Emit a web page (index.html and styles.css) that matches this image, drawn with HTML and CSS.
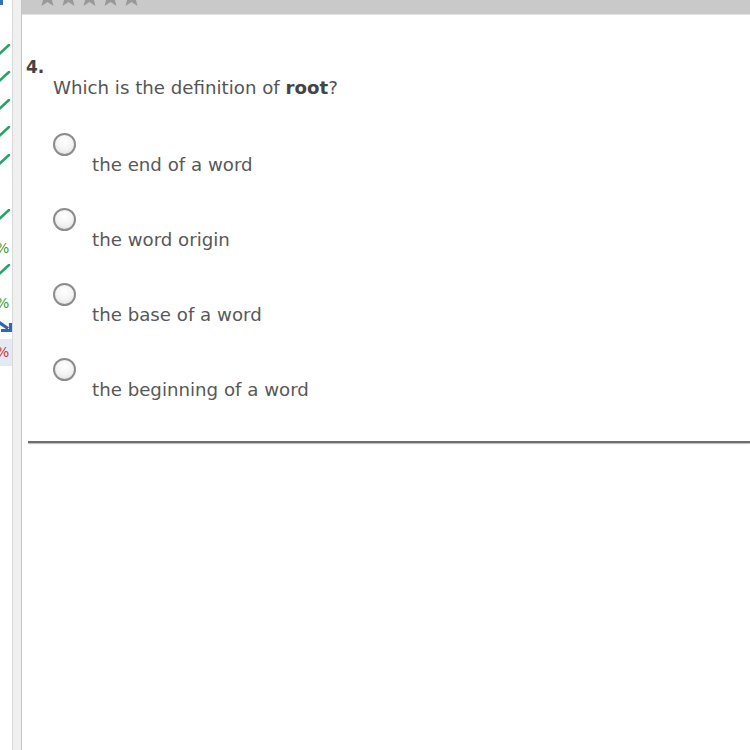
FILE: index.html
```html
<!DOCTYPE html>
<html>
<head>
<meta charset="utf-8">
<link rel="stylesheet" href="styles.css">
</head>
<body>
<div class="page">
  <aside class="side">
    <div class="side-top"></div>
    <div class="row"><svg class="chk" viewBox="0 0 12 12"><path d="M-2 11 L9 1"/></svg></div>
    <div class="row"><svg class="chk" viewBox="0 0 12 12"><path d="M-2 11 L9 1"/></svg></div>
    <div class="row"><svg class="chk" viewBox="0 0 12 12"><path d="M-2 11 L9 1"/></svg></div>
    <div class="row"><svg class="chk" viewBox="0 0 12 12"><path d="M-2 11 L9 1"/></svg></div>
    <div class="row"><svg class="chk" viewBox="0 0 12 12"><path d="M-2 11 L9 1"/></svg></div>
    <div class="row"></div>
    <div class="row"><svg class="chk" viewBox="0 0 12 12"><path d="M-2 11 L9 1"/></svg></div>
    <div class="row pct good"><span>%</span></div>
    <div class="row"><svg class="chk" viewBox="0 0 12 12"><path d="M-2 11 L9 1"/></svg></div>
    <div class="row pct good"><span>%</span></div>
    <div class="row"><svg class="arr" viewBox="0 0 12 12"><path d="M-3 1 L8 8.5 M1 10.5 L10.5 10.5 L10.5 3" /></svg></div>
    <div class="row pct bad current"><span>%</span></div>
  </aside>
  <div class="divider"></div>
  <main class="main">
    <div class="topbar">
      <div class="stars">
        <svg viewBox="0 0 20 20"><path d="M10 1 L12.6 7 L19 7.4 L14 11.6 L15.7 18 L10 14.4 L4.3 18 L6 11.6 L1 7.4 L7.4 7 Z"/></svg>
        <svg viewBox="0 0 20 20"><path d="M10 1 L12.6 7 L19 7.4 L14 11.6 L15.7 18 L10 14.4 L4.3 18 L6 11.6 L1 7.4 L7.4 7 Z"/></svg>
        <svg viewBox="0 0 20 20"><path d="M10 1 L12.6 7 L19 7.4 L14 11.6 L15.7 18 L10 14.4 L4.3 18 L6 11.6 L1 7.4 L7.4 7 Z"/></svg>
        <svg viewBox="0 0 20 20"><path d="M10 1 L12.6 7 L19 7.4 L14 11.6 L15.7 18 L10 14.4 L4.3 18 L6 11.6 L1 7.4 L7.4 7 Z"/></svg>
        <svg viewBox="0 0 20 20"><path d="M10 1 L12.6 7 L19 7.4 L14 11.6 L15.7 18 L10 14.4 L4.3 18 L6 11.6 L1 7.4 L7.4 7 Z"/></svg>
      </div>
    </div>
    <section class="question">
      <div class="qnum">4.</div>
      <p class="qtext">Which is the definition of <b>root</b>?</p>
      <ul class="choices">
        <li><span class="radio"></span><span class="label">the end of a word</span></li>
        <li><span class="radio"></span><span class="label">the word origin</span></li>
        <li><span class="radio"></span><span class="label">the base of a word</span></li>
        <li><span class="radio"></span><span class="label">the beginning of a word</span></li>
      </ul>
      <hr class="rule">
    </section>
  </main>
</div>
</body>
</html>
```

FILE: styles.css
```css
* { box-sizing: border-box; }
html, body { margin: 0; padding: 0; background: #fff; }
body { font-family: "DejaVu Sans", Verdana, sans-serif; color: #555; }
.page { display: flex; height: 750px; overflow: hidden; }

.side { width: 12px; flex: none; display: flex; flex-direction: column; background: #fff; }
.side-top { height: 36px; }
.side-top::before { content: ""; display: block; width: 3px; height: 5px; background: #3a6fb0; }
.row { height: 27.5px; flex: none; display: flex; align-items: center; overflow: hidden; }
.chk { width: 12px; height: 12px; }
.chk path { stroke: #2aa36a; stroke-width: 2.6; fill: none; stroke-linecap: round; }
.arr { width: 12px; height: 12px; margin-top: 2px; }
.arr path { stroke: #2f68b0; stroke-width: 3.2; fill: none; }
.pct { align-items: flex-end; padding-bottom: 0; font-size: 14px; }
.pct span { margin-left: -4px; line-height: 16px; }
.good { color: #3a9c3a; }
.bad { color: #d9323a; }
.current { background: #e3eaf4; align-items: center; }

.divider { width: 10px; flex: none; background: #f0f0f0; border-left: 1px solid #d8d8d8; border-right: 1px solid #c4c4c4; }

.main { flex: 1; display: flex; flex-direction: column; }
.topbar { height: 15px; flex: none; background: #c9c9c9; border-bottom: 1px solid #e2e2e2; overflow: hidden; padding-left: 15px; }
.stars { display: flex; gap: 0; margin-top: -13px; }
.stars svg { width: 21px; height: 21px; }
.stars path { fill: #999; }

.question { padding: 43px 0 0 4px; }
.qnum { font-weight: bold; font-size: 17px; color: #444; line-height: 18px; }
.qtext { margin: 1px 0 0 27px; font-size: 18.2px; line-height: 22px; color: #555; }
.qtext b { color: #444; }
.choices { list-style: none; margin: 34px 0 0 27px; padding: 0; display: flex; flex-direction: column; gap: 32px; }
.choices li { display: flex; flex-direction: column; }
.radio { width: 23px; height: 23px; border-radius: 50%; border: 2px solid #8c8c8c; background: radial-gradient(circle at 50% 35%, #fff 0%, #f4f4f4 50%, #dcdcdc 100%); }
.label { margin: -2px 0 0 39px; font-size: 18.2px; line-height: 22px; color: #585858; }
.rule { margin: 40px 0 0 2px; border: 0; height: 2px; background: #6e6e6e; box-shadow: 0 1px 1px #bbb; }
```
